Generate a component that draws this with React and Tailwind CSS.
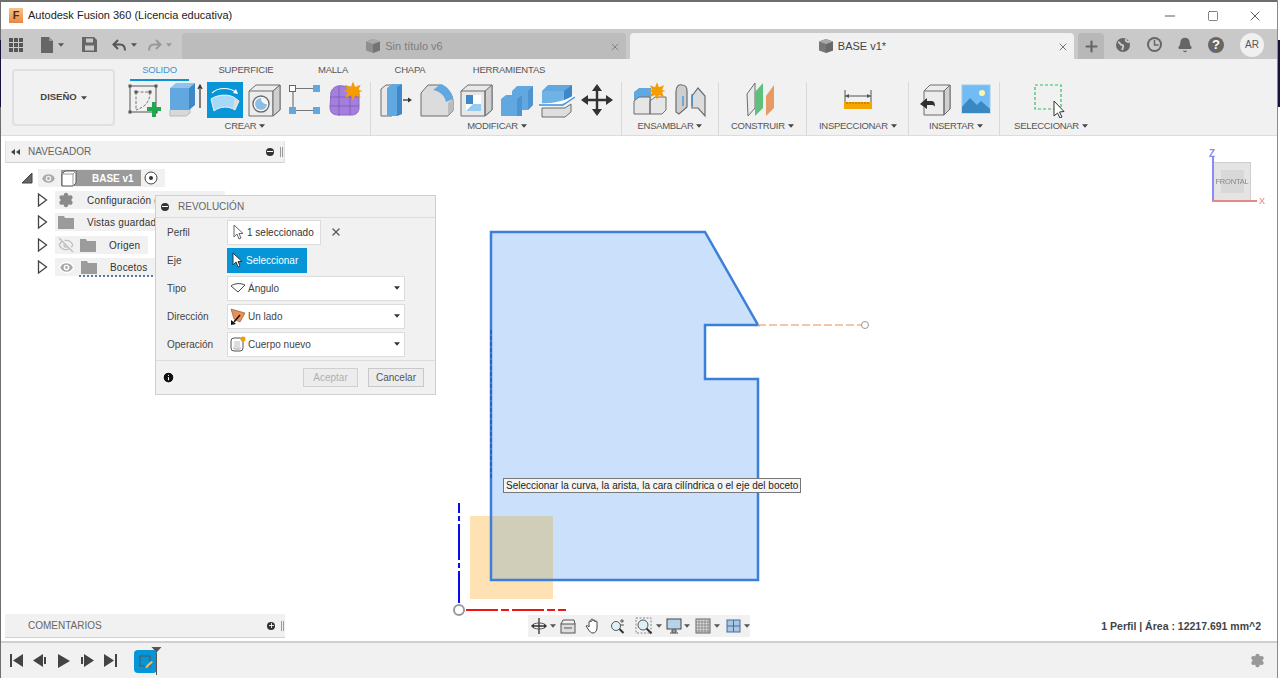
import { useState } from "react";
import { Minus, Square, X, Plus, Bell, Settings, Eye, EyeOff, Info } from "lucide-react";

const FONT = { fontFamily: '"Liberation Sans", Arial, sans-serif' };

const Caret = ({ className = "" }) => (
  <svg width="6" height="4" viewBox="0 0 7 4" className={className}>
    <path d="M0 0h7L3.5 4z" fill="currentColor" />
  </svg>
);

/* ---------- ribbon icons, all drawn on a 36x36 box ---------- */
const Blue = "#62a8e0";
const BlueDark = "#3f87c7";
const Line = "#6d6d6d";

const SketchIcon = () => (
  <svg width="36" height="36" viewBox="0 0 36 36">
    <rect x="3" y="4" width="26" height="26" fill="none" stroke="#555" strokeWidth="1" />
    <path d="M9 10h14M9 10v18M23 10c0 10-5 15-14 18" fill="none" stroke="#777" strokeDasharray="3 1.5" />
    {[[3, 4], [29, 4], [3, 30], [29, 30], [9, 10], [23, 10]].map(([x, y], i) => (
      <rect key={i} x={x - 1.5} y={y - 1.5} width="3" height="3" fill="#555" />
    ))}
    <path d="M25 20h4v5h5v4h-5v6h-4v-6h-5v-4h5z" fill="#1fa84f" />
  </svg>
);
const ExtrudeIcon = () => (
  <svg width="36" height="36" viewBox="0 0 36 36">
    <path d="M3 28l4-3h16v6l-4 3H3z" fill="#d8d8d8" stroke="#bbb" />
    <path d="M3 6h19v22H3z" fill={Blue} />
    <path d="M3 6l6-5h19l-6 5z" fill="#8cc4ee" />
    <path d="M22 6l6-5v22l-6 5z" fill={BlueDark} />
    <path d="M33 26V4M31 7l2-4 2 4" fill="none" stroke="#333" strokeWidth="1.2" />
  </svg>
);
const RevolveIcon = () => (
  <div className="w-9 h-9 bg-[#0696d7] flex items-center justify-center">
    <svg width="32" height="32" viewBox="0 0 32 32">
      <path d="M3 9c6-6 18-6 25 0" fill="none" stroke="#fff" strokeWidth="1.2" />
      <path d="M27 5l2 5-5-1z" fill="#fff" />
      <path d="M2 15c7-5 19-5 24-1l4 3-4 9c-6-4-15-4-21 1z" fill="#a8d8f8" stroke="#e8f4fc" />
      <path d="M26 14l4 3-4 9-2-3z" fill="#dcdcdc" />
    </svg>
  </div>
);
const HoleIcon = () => (
  <svg width="36" height="36" viewBox="0 0 36 36">
    <path d="M2 9l7-6h24v25l-7 6H2z" fill="#ececec" stroke={Line} />
    <path d="M2 9h24v25M26 9l7-6" fill="none" stroke={Line} />
    <path d="M26 9l7-6v25l-7 6z" fill="#cfcfcf" stroke={Line} />
    <circle cx="14" cy="22" r="8" fill="#fff" stroke={Line} strokeWidth="1.4" />
    <circle cx="14" cy="22" r="6" fill="#8dbde3" />
    <path d="M14 16a6 6 0 0 1 6 6c-3 0-6-2-6-6z" fill="#fff" />
  </svg>
);
const PatternIcon = () => (
  <svg width="36" height="36" viewBox="0 0 36 36">
    <path d="M9 6.500h17M6 10v15M9 28.500h17" stroke="#777" strokeWidth="1.2" fill="none" />
    <rect x="2.500" y="3.500" width="6" height="6" fill="#fff" stroke="#666" />
    <rect x="26" y="3" width="7" height="7" fill={Blue} />
    <rect x="2" y="25" width="7" height="7" fill={Blue} />
    <rect x="26" y="25" width="7" height="7" fill={Blue} />
  </svg>
);
const Sun = ({ x, y, s = 1 }) => (
  <path
    transform={`translate(${x} ${y}) scale(${s})`}
    d="M0-8l1.800 4.600 4.600-1.800-1.800 4.200L8 0 4.600 1 6.400 5.600 1.800 3.600 0 8-1.800 3.600-6.400 5.600-4.600 1-8 0-4.600-1-6.400-5.200-1.800-3.400z"
    fill="#f59c00"
  />
);
const FormIcon = () => (
  <svg width="36" height="36" viewBox="0 0 36 36">
    <path d="M4 10c2-5 6-7 12-6l13 2c3 1 3 3 3 7v13c0 4-3 7-7 7H12c-6 0-9-2-9-8z" fill="#a57fdd" stroke="#8a6bc5" />
    <path d="M12 4v30M3 15h29M3 24h29M23 6v27" stroke="#7b5bb8" strokeWidth="0.8" />
    <Sun x={26} y={9} s={1.2} />
  </svg>
);
const PressPullIcon = () => (
  <svg width="36" height="36" viewBox="0 0 36 36">
    <path d="M2 7l5-4h6v31H2z" fill="#e8e8e8" stroke={Line} />
    <path d="M8 6l5-4h10l-1 6v24l-4 2H8z" fill={Blue} />
    <path d="M18 5l5-3v30l-5 2z" fill={BlueDark} />
    <path d="M24 18h6" stroke="#333" strokeWidth="1.3" />
    <path d="M33 18l-4-2.400v4.800z" fill="#333" />
  </svg>
);
const FilletIcon = () => (
  <svg width="36" height="36" viewBox="0 0 36 36">
    <path d="M2 11l7-8h12c7 2 12 8 13 15v11l-5 5H2z" fill="#dcdcdc" stroke={Line} />
    <path d="M14 8l8-6c6 2 11 8 12 15l-7 3c-1-6-6-11-13-12z" fill={Blue} />
    <path d="M29 34V21l5-4v12z" fill="#bcbcbc" />
  </svg>
);
const ShellIcon = () => (
  <svg width="36" height="36" viewBox="0 0 36 36">
    <path d="M2 9l7-6h24v25l-7 6H2z" fill="#e8e8e8" stroke={Line} />
    <path d="M26 9l7-6v25l-7 6z" fill="#cfcfcf" stroke={Line} />
    <path d="M2 9h24v25" fill="none" stroke={Line} />
    <rect x="7" y="13" width="15" height="16" fill="#fff" />
    <path d="M7 13h7v9H7z" fill={BlueDark} />
    <path d="M7 29l7-7h8v7z" fill="#96cbf3" />
  </svg>
);
const CombineIcon = () => (
  <svg width="36" height="36" viewBox="0 0 36 36">
    <path d="M13 9l5-5h16v19l-5 5H23v6H2V17l5-4h6z" fill={Blue} />
    <path d="M29 9l5-5v19l-5 5zM18 17l5-4v21h-5z" fill={BlueDark} opacity="0.6" />
  </svg>
);
const SplitIcon = () => (
  <svg width="36" height="36" viewBox="0 0 36 36">
    <path d="M3 9l6-6h24v14l-8 5H3z" fill={Blue} />
    <path d="M3 9h22v12H3z" fill="#6fb2e6" />
    <path d="M25 9l8-6v13l-8 5z" fill={BlueDark} />
    <path d="M0 23c10 0 26-1 36-9" fill="none" stroke="#fff" strokeWidth="3" />
    <path d="M0 23h24l12-8" fill="none" stroke="#3a8fd8" strokeWidth="1.3" />
    <path d="M3 26h23l6-4v8l-6 5H3z" fill="#dedede" stroke={Line} />
  </svg>
);
const MoveIcon = () => (
  <svg width="36" height="36" viewBox="0 0 36 36">
    <path d="M18 4v28M4 18h28" stroke="#333" strokeWidth="2.400" />
    <path d="M18 2l5 7H13zM18 34l5-7H13zM2 18l7-5v10zM34 18l-7-5v10z" fill="#333" />
  </svg>
);
const NewComponentIcon = () => (
  <svg width="36" height="36" viewBox="0 0 36 36">
    <path d="M2 10l5-4h12v13H2z" fill={Blue} />
    <path d="M2 19l5-4h11v17H2zM18 19l5-4h11v13l-4 4H18z" fill="#e6e6e6" stroke={Line} />
    <Sun x={25} y={9} s={1.1} />
  </svg>
);
const JointIcon = () => (
  <svg width="36" height="36" viewBox="0 0 36 36">
    <path d="M4 10c0-6 3-8 6-7 3 0 5 2 5 6v16l-8 7-3-2z" fill="#cfcfcf" stroke={Line} strokeWidth="1.2" />
    <path d="M20 14l6-8 7 8v20l-7-8h-6z" fill="#dcdcdc" stroke={Line} strokeWidth="1.2" />
    <path d="M11 14v10M20 12v12" stroke="#2b8fdc" strokeWidth="1.2" />
  </svg>
);
const PlaneIcon = () => (
  <svg width="36" height="36" viewBox="0 0 36 36">
    <path d="M3 12l8-11v25l-7 8z" fill="#ebebeb" stroke={Line} />
    <path d="M11 34V10l8-9v25z" fill="#5fc07e" />
    <path d="M22 14l8-11v23l-8 8z" fill="#e79a66" />
  </svg>
);
const MeasureIcon = () => (
  <svg width="36" height="36" viewBox="0 0 36 36">
    <path d="M5 8v14M31 8v14M5 14h26" stroke="#555" strokeWidth="1" />
    <path d="M5 14l4-2v4zM31 14l-4-2v4z" fill="#555" />
    <rect x="4" y="20" width="28" height="7" fill="#f4a500" />
    <path d="M7 20v2M10 20v2M13 20v2M16 20v2M19 20v2M22 20v2M25 20v2M28 20v2" stroke="#8a5c00" strokeWidth="0.8" />
  </svg>
);
const InsertDerivedIcon = () => (
  <svg width="36" height="36" viewBox="0 0 36 36">
    <path d="M6 9l6-6h20v24l-6 6H6z" fill="#ececec" stroke={Line} />
    <path d="M26 9l6-6v24l-6 6z" fill="#cfcfcf" stroke={Line} />
    <path d="M6 9h20v24" fill="none" stroke={Line} />
    <path d="M2 22l7-6v3h5c2 0 3 2 3 6-1-2-2-2-4-2H9v4z" fill="#2f2f2f" />
  </svg>
);
const CanvasIcon = () => (
  <svg width="36" height="36" viewBox="0 0 36 36">
    <rect x="4" y="3" width="28" height="28" fill="#72bcf5" stroke="#9ccaec" />
    <circle cx="24" cy="11" r="3" fill="#fdf4b0" />
    <path d="M4 25l8-9 7 7 4-4 9 8v4H4z" fill="#3a88c2" />
  </svg>
);
const SelectIcon = () => (
  <svg width="36" height="36" viewBox="0 0 36 36">
    <rect x="2" y="3" width="26" height="24" fill="none" stroke="#2fbf63" strokeWidth="1.2" strokeDasharray="3 2" />
    <path d="M21 19v15l3.500-3 2.500 5 2-1-2.500-5 4.500-.5z" fill="#fff" stroke="#333" />
  </svg>
);

/* ---------- small flat glyphs ---------- */
const CubeGlyph = ({ color = "#777" }) => (
  <svg width="16" height="16" viewBox="0 0 16 16">
    <path d="M1 3.500L8 1l7 2.500v9L8 15l-7-2.500z" fill={color} />
    <path d="M8 6l7-2.500v9L8 15z" fill="#5f5f5f" opacity="0.55" />
    <path d="M1 3.500L8 1l7 2.500L8 6z" fill="#aaa" />
  </svg>
);
const GridGlyph = () => (
  <svg width="14" height="14" viewBox="0 0 14 14" fill="#555">
    {[0, 5, 10].flatMap((y) =>
      [0, 5, 10].map((x) => <rect key={`${x}${y}`} x={x} y={y} width="4" height="4" />)
    )}
  </svg>
);
const FileGlyph = () => (
  <svg width="14" height="16" viewBox="0 0 14 16"><path d="M1 0h8l4 4v12H1z" fill="#666" /><path d="M9 0v4h4z" fill="#999" /></svg>
);
const SaveGlyph = () => (
  <svg width="15" height="15" viewBox="0 0 15 15">
    <path d="M0 0h12l3 3v12H0z" fill="#666" />
    <rect x="4" y="1.500" width="7" height="4" fill="#c8c8c8" />
    <rect x="3" y="8.500" width="9" height="5" fill="#c8c8c8" />
  </svg>
);
const UndoGlyph = ({ flip, color }) => (
  <svg width="15" height="14" viewBox="0 0 15 14" className={flip ? "-scale-x-100" : ""}>
    <path d="M6 2L1.500 6.500 6 11M2 6.500h6c3 0 5 2 5 6" fill="none" stroke={color} strokeWidth="2" />
  </svg>
);
const TreeArrow = () => (
  <svg width="11" height="14" viewBox="0 0 11 14">
    <path d="M1.500 1l8 6-8 6z" fill="#fff" stroke="#444" strokeWidth="1.300" />
  </svg>
);
const CubeOutline = () => (
  <svg width="17" height="17" viewBox="0 0 17 17">
    <path d="M1 4l3-3h11v12l-3 3H1z" fill="#fff" stroke="#555" />
    <path d="M1 4h11v12M12 4l3-3" fill="none" stroke="#999" />
  </svg>
);
const GearGlyph = () => <Settings size={16} fill="#8a8a8a" stroke="#8a8a8a" />;
const FolderGlyph = () => (
  <svg width="16" height="13" viewBox="0 0 16 13"><path d="M0 0h6l1 2h9v11H0z" fill="#9b9b9b" /></svg>
);

const Tab = ({ children, active }) => (
  <div className={active
    ? "relative h-[22px] flex items-center justify-center text-[#3a97d3]"
    : "h-[22px] flex items-center justify-center text-[#555]"}>
    {children}
    {active && <div className="absolute left-0 right-0 bottom-0 h-[2px] bg-[#0696d7]" />}
  </div>
);

const RibbonGroup = ({ label, icons, width, pad }) => (
  <div className={`flex shrink-0 border-r border-[#d9d9d9] h-[60px] ${width} ${pad}`}>
    <div className="flex flex-col items-center">
      <div className="flex h-[36px] items-center">
        {icons.map((icon, i) => (
          <div key={i} className="w-10 flex justify-center">{icon}</div>
        ))}
      </div>
      <div className="mt-[1px] flex items-center gap-[3px] text-[9.5px] tracking-[-0.3px] leading-[14px] text-[#555] whitespace-nowrap">
        {label}
        <Caret className="text-[#444]" />
      </div>
    </div>
  </div>
);

const Ribbon = () => (
  <div className="h-[77px] bg-[#f1f1f1] border-b border-[#dcdcdc] flex shrink-0">
    <div className="ml-3 mt-[10px] w-[103px] h-[57px] rounded border-2 border-[#e0e0e0] flex items-center justify-center gap-1 text-[9.5px] font-bold text-[#444]">
      DISEÑO
      <Caret />
    </div>
    <div className="ml-[10px] flex flex-col">
      <div className="grid grid-cols-[auto_auto_auto_auto_auto] justify-start h-[22px] ml-[5px] text-[9.5px] tracking-[-0.2px]">
        <div className="w-[59px]"><Tab active>SOLIDO</Tab></div>
        <div className="w-[60px] ml-[27px]"><Tab>SUPERFICIE</Tab></div>
        <div className="w-[40px] ml-[37px]"><Tab>MALLA</Tab></div>
        <div className="w-[40px] ml-[37px]"><Tab>CHAPA</Tab></div>
        <div className="w-[80px] ml-[39px]"><Tab>HERRAMIENTAS</Tab></div>
      </div>
      <div className="flex mt-[1px]">
        <RibbonGroup label="CREAR" width="w-[246px]" pad="pl-0"
          icons={[<SketchIcon />, <ExtrudeIcon />, <RevolveIcon />, <HoleIcon />, <PatternIcon />, <FormIcon />]} />
        <RibbonGroup label="MODIFICAR" width="w-[251px]" pad="pl-[6px]"
          icons={[<PressPullIcon />, <FilletIcon />, <ShellIcon />, <CombineIcon />, <SplitIcon />, <MoveIcon />]} />
        <RibbonGroup label="ENSAMBLAR" width="w-[97px]" pad="pl-[8px]"
          icons={[<NewComponentIcon />, <JointIcon />]} />
        <RibbonGroup label="CONSTRUIR" width="w-[88px]" pad="pl-[12px]" icons={[<PlaneIcon />]} />
        <RibbonGroup label="INSPECCIONAR" width="w-[102px]" pad="pl-[12px]" icons={[<MeasureIcon />]} />
        <RibbonGroup label="INSERTAR" width="w-[91px]" pad="pl-[7px]"
          icons={[<InsertDerivedIcon />, <CanvasIcon />]} />
        <div className="pl-[13px]">
          <div className="flex flex-col items-center w-[76px]">
            <div className="h-[36px] w-9"><SelectIcon /></div>
            <div className="mt-[1px] flex items-center gap-[3px] text-[9.5px] tracking-[-0.3px] leading-[14px] text-[#555] whitespace-nowrap">
              SELECCIONAR
              <Caret className="text-[#444]" />
            </div>
          </div>
        </div>
      </div>
    </div>
  </div>
);

const TitleBar = () => (
  <div className="h-[29px] bg-white border-t-2 border-[#6e6e6e] flex items-center shrink-0">
    <div className="ml-[9px] w-[14px] h-[15px] bg-gradient-to-b from-[#f6c48f] to-[#e8873c] flex items-center justify-center text-[11px] font-bold text-[#5b2b06]">F</div>
    <span className="ml-[5px] text-[11px] text-[#222]">Autodesk Fusion 360 (Licencia educativa)</span>
    <div className="ml-auto flex items-center text-[#333]">
      <Minus size={16} strokeWidth={1.2} />
      <Square size={12} strokeWidth={1.2} className="ml-[29px]" />
      <X size={16} strokeWidth={1.2} className="ml-[28px] mr-[14px]" />
    </div>
  </div>
);

const DocTab = ({ active, name, width }) => (
  <div className={`${width} h-[26px] rounded-t flex items-center relative justify-center gap-1 text-[11px] ${active ? "bg-[#f1f1f1] text-[#444]" : "bg-[#bcbcbc] text-[#7d7d7d]"}`}>
    <CubeGlyph color={active ? "#777" : "#8f8f8f"} />
    {name}
    <X size={12} strokeWidth={1.8} className={`absolute right-[5px] top-[8px] ${active ? "text-[#666]" : "text-[#7d7d7d]"}`} />
  </div>
);

const TabBar = () => (
  <div className="h-[30px] bg-[#c9c9c9] flex items-end shrink-0">
    <div className="flex items-center h-[30px] pl-[9px] w-[182px] shrink-0 pt-[1px]">
      <GridGlyph />
      <div className="ml-[17px]"><FileGlyph /></div>
      <Caret className="ml-[4px] text-[#555]" />
      <div className="ml-[18px]"><SaveGlyph /></div>
      <div className="ml-[15px]"><UndoGlyph color="#555" /></div>
      <Caret className="ml-[4px] text-[#555]" />
      <div className="ml-[10px]"><UndoGlyph flip color="#999" /></div>
      <Caret className="ml-[4px] text-[#999]" />
    </div>
    <DocTab name="Sin título v6" width="w-[444px]" />
    <div className="w-[4px]" />
    <DocTab active name="BASE v1*" width="w-[444px]" />
    <div className="ml-[4px] w-[26px] h-[26px] rounded-t bg-[#b8b8b8] flex items-center justify-center text-[#666]">
      <Plus size={17} strokeWidth={3} />
    </div>
    <div className="flex items-center h-[30px] pt-[1px] text-[#666]">
      <svg width="16" height="16" viewBox="0 0 16 16" className="ml-[11px]"><circle cx="8" cy="8" r="7" fill="#666" /><path d="M3 5c3 1 2 3 4 3s1 3 0 5M11 2c-1 2 1 3 3 3" stroke="#c9c9c9" strokeWidth="2" fill="none" /></svg>
      <svg width="17" height="17" viewBox="0 0 17 17" className="ml-[15px]"><circle cx="8.500" cy="8.500" r="7.500" fill="#666" /><circle cx="8.500" cy="8.500" r="5.500" fill="#c9c9c9" /><path d="M8.500 4v5h4" stroke="#666" strokeWidth="1.500" fill="none" /></svg>
      <Bell size={16} fill="#666" className="ml-[14px]" />
      <div className="ml-[15px] w-[16px] h-[16px] rounded-full bg-[#666] text-white text-[13px] font-bold leading-[16px] text-center">?</div>
      <div className="ml-[16px] w-[24px] h-[24px] rounded-full bg-[#f0f0f0] text-[10px] text-[#555] leading-[24px] text-center">AR</div>
    </div>
  </div>
);

const TreeRow = ({ top, width, eye, icon, label, labelClass, wavy }) => (
  <div className={`absolute left-[37px] flex items-center ${top}`}>
    <TreeArrow />
    <div className={`relative ml-[7px] h-[18px] bg-[#f1f1f1] flex items-center ${width}`}>
      {eye === "on" && <Eye size={17} fill="#aaa" stroke="#fff" className="ml-[3px]" />}
      {eye === "off" && <EyeOff size={16} stroke="#c0c0c0" className="ml-[3px]" />}
      <div className={eye ? "ml-[6px]" : "ml-[3px]"}>{icon}</div>
      <span className={`text-[10px] tracking-[0.2px] text-[#333] ${labelClass}`}>{label}</span>
      {wavy && <div className="absolute left-[24px] right-0 bottom-[-1px] border-b-2 border-dotted border-[#5577a6]" />}
    </div>
  </div>
);

const Navigator = () => (
  <>
    <div className="absolute left-[5px] top-[5px] w-[280px] h-[22px] bg-[#f1f1f1] border-b border-[#d0d0d0] border-x border-x-[#e0e0e0] flex items-center text-[10px] text-[#666]">
      <svg width="9" height="6" viewBox="0 0 9 6" className="ml-[5px]"><path d="M4 0v6L0 3zM9 0v6L5 3z" fill="#444" /></svg>
      <span className="ml-[8px]">NAVEGADOR</span>
      <div className="ml-auto w-[8px] h-[8px] rounded-full bg-[#333] flex items-center justify-center"><div className="w-[6px] h-[1px] bg-white" /></div>
      <div className="ml-[6px] mr-[1px] w-[3px] h-[10px] border-x border-[#999]" />
    </div>
    <div className="absolute left-[21px] top-[33px] flex items-center">
      <svg width="12" height="12" viewBox="0 0 12 12"><path d="M11 1v10H1z" fill="#666" stroke="#444" /></svg>
      <div className="ml-[5px] h-[18px] w-[127px] bg-[#f1f1f1] flex items-center">
        <Eye size={17} fill="#aaa" stroke="#f1f1f1" className="ml-[2px]" />
        <div className="ml-[4px] w-[80px] h-[16px] bg-[#9a9a9a] flex items-center">
          <CubeOutline />
          <span className="ml-[14px] text-[10px] font-bold text-white">BASE v1</span>
        </div>
        <svg width="14" height="14" viewBox="0 0 14 14" className="ml-[3px]"><circle cx="7" cy="7" r="6" fill="#fff" stroke="#444" /><circle cx="7" cy="7" r="2" fill="#333" /></svg>
      </div>
    </div>
    <TreeRow top="top-[55px]" width="w-[170px]" icon={<GearGlyph />} label="Configuración de" labelClass="ml-[13px]" />
    <TreeRow top="top-[77px]" width="w-[170px]" icon={<FolderGlyph />} label="Vistas guardadas" labelClass="ml-[13px]" />
    <TreeRow top="top-[100px]" width="w-[93px]" eye="off" icon={<FolderGlyph />} label="Origen" labelClass="ml-[13px]" />
    <TreeRow top="top-[122px]" width="w-[110px]" eye="on" wavy icon={<FolderGlyph />} label="Bocetos" labelClass="ml-[13px]" />
  </>
);

const FieldRow = ({ label, children }) => (
  <div className="flex items-center h-[28px]">
    <span className="w-[60px] ml-[11px] text-[10px] text-[#444]">{label}</span>
    {children}
  </div>
);

const SelectBox = ({ icon, value }) => (
  <div className="w-[178px] h-[25px] bg-white border border-[#dcdcdc] flex items-center text-[10px] text-[#444]">
    <div className="w-[20px] flex justify-center">{icon}</div>
    <span>{value}</span>
    <Caret className="ml-auto mr-[4px] text-[#333]" />
  </div>
);

const RevolvePanel = () => {
  const [tipo] = useState("Ángulo");
  return (
    <div className="absolute left-[155px] top-[59px] w-[281px] h-[200px] bg-[#f1f1f1] border border-[#cfcfcf] flex flex-col">
      <div className="h-[22px] flex items-center border-b border-[#dcdcdc]">
        <div className="ml-[5px] w-[8px] h-[8px] rounded-full bg-[#333] flex items-center justify-center"><div className="w-[6px] h-[1px] bg-white" /></div>
        <span className="ml-[9px] text-[10px] text-[#666]">REVOLUCIÓN</span>
      </div>
      <div className="flex-1">
        <FieldRow label="Perfil">
          <div className="w-[94px] h-[25px] bg-white border border-[#dcdcdc] flex items-center text-[10px] text-[#333]">
            <svg width="12" height="16" viewBox="0 0 12 16" className="ml-[5px]"><path d="M1 1v12l3-3 2 5 2-1-2-4.500h4z" fill="#fff" stroke="#666" /></svg>
            <span className="ml-[2px]">1 seleccionado</span>
          </div>
          <X size={12} strokeWidth={2.6} className="ml-[9px] text-[#555]" />
        </FieldRow>
        <FieldRow label="Eje">
          <div className="w-[80px] h-[25px] bg-[#0696d7] flex items-center text-[10px] text-white">
            <svg width="12" height="16" viewBox="0 0 12 16" className="ml-[5px]"><path d="M1 1v12l3-3 2 5 2-1-2-4.500h4z" fill="#fff" stroke="#333" /></svg>
            <span className="ml-[2px]">Seleccionar</span>
          </div>
        </FieldRow>
        <FieldRow label="Tipo">
          <SelectBox value={tipo} icon={
            <svg width="16" height="10" viewBox="0 0 16 10"><path d="M1 3l7 6 7-7M1 3c4-3 10-3 14-1" fill="none" stroke="#444" /></svg>
          } />
        </FieldRow>
        <FieldRow label="Dirección">
          <SelectBox value="Un lado" icon={
            <svg width="16" height="17" viewBox="0 0 16 17"><path d="M1 1l14 4-5 9-6-3z" fill="#ef8f4f" stroke="#555" strokeWidth="0.6" /><path d="M10 7l-6 7" stroke="#111" strokeWidth="1.500" /><path d="M1 12l0 5 5-1z" fill="#111" /></svg>
          } />
        </FieldRow>
        <FieldRow label="Operación">
          <SelectBox value="Cuerpo nuevo" icon={
            <svg width="16" height="16" viewBox="0 0 16 16"><rect x="1" y="2" width="12" height="13" rx="3" fill="#fff" stroke="#555" /><ellipse cx="7" cy="12" rx="4" ry="2" fill="#ccc" /><path d="M4 5v7h6V5" fill="#ddd" /><circle cx="13" cy="3" r="2.500" fill="#f59c00" /></svg>
          } />
        </FieldRow>
      </div>
      <div className="h-[34px] border-t border-[#dcdcdc] flex items-center">
        <Info size={13} fill="#111" stroke="#fff" className="ml-[6px]" />
        <div className="ml-auto w-[55px] h-[19px] border border-[#d0d0d0] bg-[#ececec] text-[10px] text-[#b0b0b0] text-center leading-[17px]">Aceptar</div>
        <div className="ml-[10px] mr-[11px] w-[56px] h-[19px] border border-[#c8c8c8] bg-[#ececec] text-[10px] text-[#555] text-center leading-[17px]">Cancelar</div>
      </div>
    </div>
  );
};

/* drawing of the sketch, in page coordinates */
const Sketch = () => (
  <svg className="absolute left-0 top-0" width="1280" height="505" viewBox="0 136 1280 505">
    <rect x="470" y="516" width="83" height="83" fill="#ffe2b3" />
    <path d="M491 232h214l53 93h-53v54h53v201H491z" fill="#cbe0fa" />
    <rect x="491" y="516" width="62" height="64" fill="#d0cdb9" />
    <path d="M491 232h214l53 93h-53v54h53v201H491z" fill="none" stroke="#3b7fd9" strokeWidth="2.500" />
    <path d="M491 330v150" stroke="#2f5fc0" strokeWidth="2" strokeDasharray="4 2" />
    <path d="M758 325h104" stroke="#eeb48c" strokeWidth="1.500" strokeDasharray="8 3" />
    <circle cx="865" cy="325" r="3.500" fill="#fff" stroke="#999" />
    <path d="M459 503v100" stroke="#0a0af0" strokeWidth="2" strokeDasharray="36 3 5 3" strokeDashoffset="26" />
    <path d="M466 610h100" stroke="#f01414" strokeWidth="2" strokeDasharray="32 3 8 3" />
    <circle cx="459" cy="610" r="5" fill="#fff" stroke="#999" strokeWidth="2" />
  </svg>
);

const ViewCube = () => (
  <div className="absolute left-[1208px] top-[10px] w-[58px] h-[62px] text-[10px] font-bold blur-[0.4px]">
    <span className="absolute left-[1px] top-0 text-[#8b8bf5]">Z</span>
    <div className="absolute left-[5px] top-[16px] w-[38px] h-[39px] bg-[#e4e4e4] border border-[#cfcfcf] flex items-center justify-center">
      <div className="w-[23px] h-[23px] bg-[#d8d8d8] flex items-center justify-center">
        <span className="text-[7.5px] font-normal tracking-tight text-[#888]">FRONTAL</span>
      </div>
    </div>
    <div className="absolute left-[4px] top-[11px] w-[2px] h-[45px] bg-[#8b8bf5]" />
    <div className="absolute left-[4px] top-[54px] w-[45px] h-[2px] bg-[#e28a8a]" />
    <span className="absolute left-[51px] top-[49px] text-[9px] text-[#f29b9b]">X</span>
  </div>
);

const NavBar = () => (
  <div className="absolute left-[528px] top-[479px] w-[222px] h-[22px] bg-[#f1f1f1] flex items-center text-[#555]">
    <svg width="16" height="16" viewBox="0 0 16 16" className="ml-[3px]"><path d="M8 0v16M1 8h14" stroke="#333" strokeWidth="1.300" /><ellipse cx="8" cy="8" rx="7" ry="3" fill="none" stroke="#555" /><path d="M0 8l3-2v4zM16 8l-3-2v4z" fill="#333" /></svg>
    <Caret className="ml-[3px]" />
    <svg width="16" height="15" viewBox="0 0 16 15" className="ml-[4px]"><rect x="1" y="5" width="14" height="9" fill="#ddd" stroke="#555" /><path d="M1 5l2-4h11l1 4M4 9h8" fill="none" stroke="#555" /></svg>
    <svg width="16" height="16" viewBox="0 0 16 16" className="ml-[9px]"><path d="M4 9V4a1 1 0 0 1 2 0V2a1 1 0 0 1 2 0v1a1 1 0 0 1 2 0v1a1 1 0 0 1 2 0v6c0 3-2 5-4 5s-3-1-5-4L1 8c1-1 2 0 3 1z" fill="#fff" stroke="#444" /></svg>
    <svg width="16" height="16" viewBox="0 0 16 16" className="ml-[9px]"><circle cx="6" cy="8" r="4.500" fill="#dff0fa" stroke="#555" /><path d="M9.500 11l4 4" stroke="#333" strokeWidth="2" /><path d="M12 1v4M10 3h4M10 7h4" stroke="#555" /></svg>
    <svg width="18" height="18" viewBox="0 0 18 18" className="ml-[9px]"><rect x="1" y="1" width="15" height="15" fill="none" stroke="#888" strokeDasharray="2 1.500" /><circle cx="8" cy="8" r="5" fill="#dff0fa" stroke="#555" /><path d="M11.500 11.500l5 5" stroke="#333" strokeWidth="2" /></svg>
    <Caret className="ml-[3px]" />
    <svg width="16" height="16" viewBox="0 0 16 16" className="ml-[4px]"><rect x="1" y="1" width="14" height="10" fill="#b7d3ea" stroke="#444" /><path d="M6 12h4v2H6zM4 15h8" stroke="#444" fill="none" /></svg>
    <Caret className="ml-[2px]" />
    <svg width="16" height="16" viewBox="0 0 16 16" className="ml-[5px]"><rect x="1" y="1" width="14" height="14" fill="#ddd" stroke="#666" /><path d="M4 1v14M7 1v14M10 1v14M13 1v14M1 4h14M1 7h14M1 10h14M1 13h14" stroke="#777" strokeWidth="0.700" /></svg>
    <Caret className="ml-[3px]" />
    <svg width="15" height="14" viewBox="0 0 15 14" className="ml-[6px]"><rect x="1" y="1" width="13" height="12" fill="#a9c6e4" stroke="#4b6a94" /><path d="M7.500 1v12M1 7h13" stroke="#4b6a94" /></svg>
    <Caret className="ml-[3px]" />
  </div>
);

const Canvas = () => (
  <div className="relative flex-1 bg-white overflow-hidden">
    <Sketch />
    <Navigator />
    <RevolvePanel />
    <ViewCube />
    <div className="absolute left-[503px] top-[342px] h-[15px] px-[2px] bg-[#f5f5f5] border border-[#777] text-[10px] leading-[13px] text-[#222] whitespace-nowrap">
      Seleccionar la curva, la arista, la cara cilíndrica o el eje del boceto
    </div>
    <div className="absolute left-[5px] top-[478px] w-[280px] h-[24px] bg-[#f1f1f1] border-b border-[#d0d0d0] flex items-center text-[10px] text-[#666]">
      <span className="ml-[23px]">COMENTARIOS</span>
      <div className="ml-auto w-[8px] h-[8px] rounded-full bg-[#333] text-white flex items-center justify-center"><Plus size={7} strokeWidth={3} /></div>
      <div className="ml-[6px] mr-[1px] w-[3px] h-[10px] border-x border-[#999]" />
    </div>
    <NavBar />
    <div className="absolute right-[16px] top-[483px] text-[10.5px] font-bold text-[#444]">1 Perfil | Área : 12217.691 mm^2</div>
  </div>
);

const Timeline = () => (
  <div className="h-[37px] bg-[#f1f1f1] border-t-2 border-[#cfcfcf] flex items-center shrink-0 text-[#444]">
    <svg width="13" height="13" viewBox="0 0 13 13" className="ml-[10px]"><path d="M0 0h2v13H0zM13 0v13L3 6.500z" fill="#444" /></svg>
    <svg width="14" height="13" viewBox="0 0 14 13" className="ml-[10px]"><path d="M10 0v13L0 6.500zM11 3h2v7h-2z" fill="#444" /></svg>
    <svg width="12" height="14" viewBox="0 0 12 14" className="ml-[11px]"><path d="M0 0l12 7-12 7z" fill="#444" /></svg>
    <svg width="14" height="13" viewBox="0 0 14 13" className="ml-[10px]"><path d="M4 0v13l10-6.500zM1 3h2v7H1z" fill="#444" /></svg>
    <svg width="13" height="13" viewBox="0 0 13 13" className="ml-[10px]"><path d="M0 0l10 6.500L0 13zM11 0h2v13h-2z" fill="#444" /></svg>
    <div className="relative ml-[17px] w-[23px] h-[23px] mt-[1px] rounded-sm bg-[#0696d7] flex items-center justify-center">
      <svg width="15" height="15" viewBox="0 0 15 15"><rect x="2" y="2" width="10" height="10" fill="none" stroke="#555" /><path d="M7 13l6-6 2 1-6 6z" fill="#f0c060" /></svg>
      <div className="absolute left-[17px] top-[-3px] flex flex-col items-center">
        <div className="w-[11px] h-[6px] bg-[#555] [clip-path:polygon(0_0,100%_0,50%_100%)]" />
        <div className="w-[1.500px] h-[22px] bg-[#555]" />
      </div>
    </div>
    <Settings size={15} fill="#999" stroke="#999" className="ml-auto mr-[12px]" />
  </div>
);

export default function App() {
  return (
    <div style={FONT} className="relative w-[1280px] h-[678px] overflow-hidden">
      <div className="w-[1277px] h-[678px] flex flex-col">
        <TitleBar />
        <TabBar />
        <Ribbon />
        <Canvas />
        <Timeline />
      </div>
      {/* window edges, the desktop behind shows through */}
      <div className="absolute left-0 top-0 w-px h-full bg-[#6e6e6e]" />
      <div className="absolute left-0 top-[40px] w-px h-[67px] bg-[#14143c]" />
      <div className="absolute right-0 top-0 w-[3px] h-full bg-white border-l border-[#8a8a8a]" />
      <div className="absolute right-0 top-[40px] w-[2px] h-[67px] bg-[#14143c]" />
    </div>
  );
}
